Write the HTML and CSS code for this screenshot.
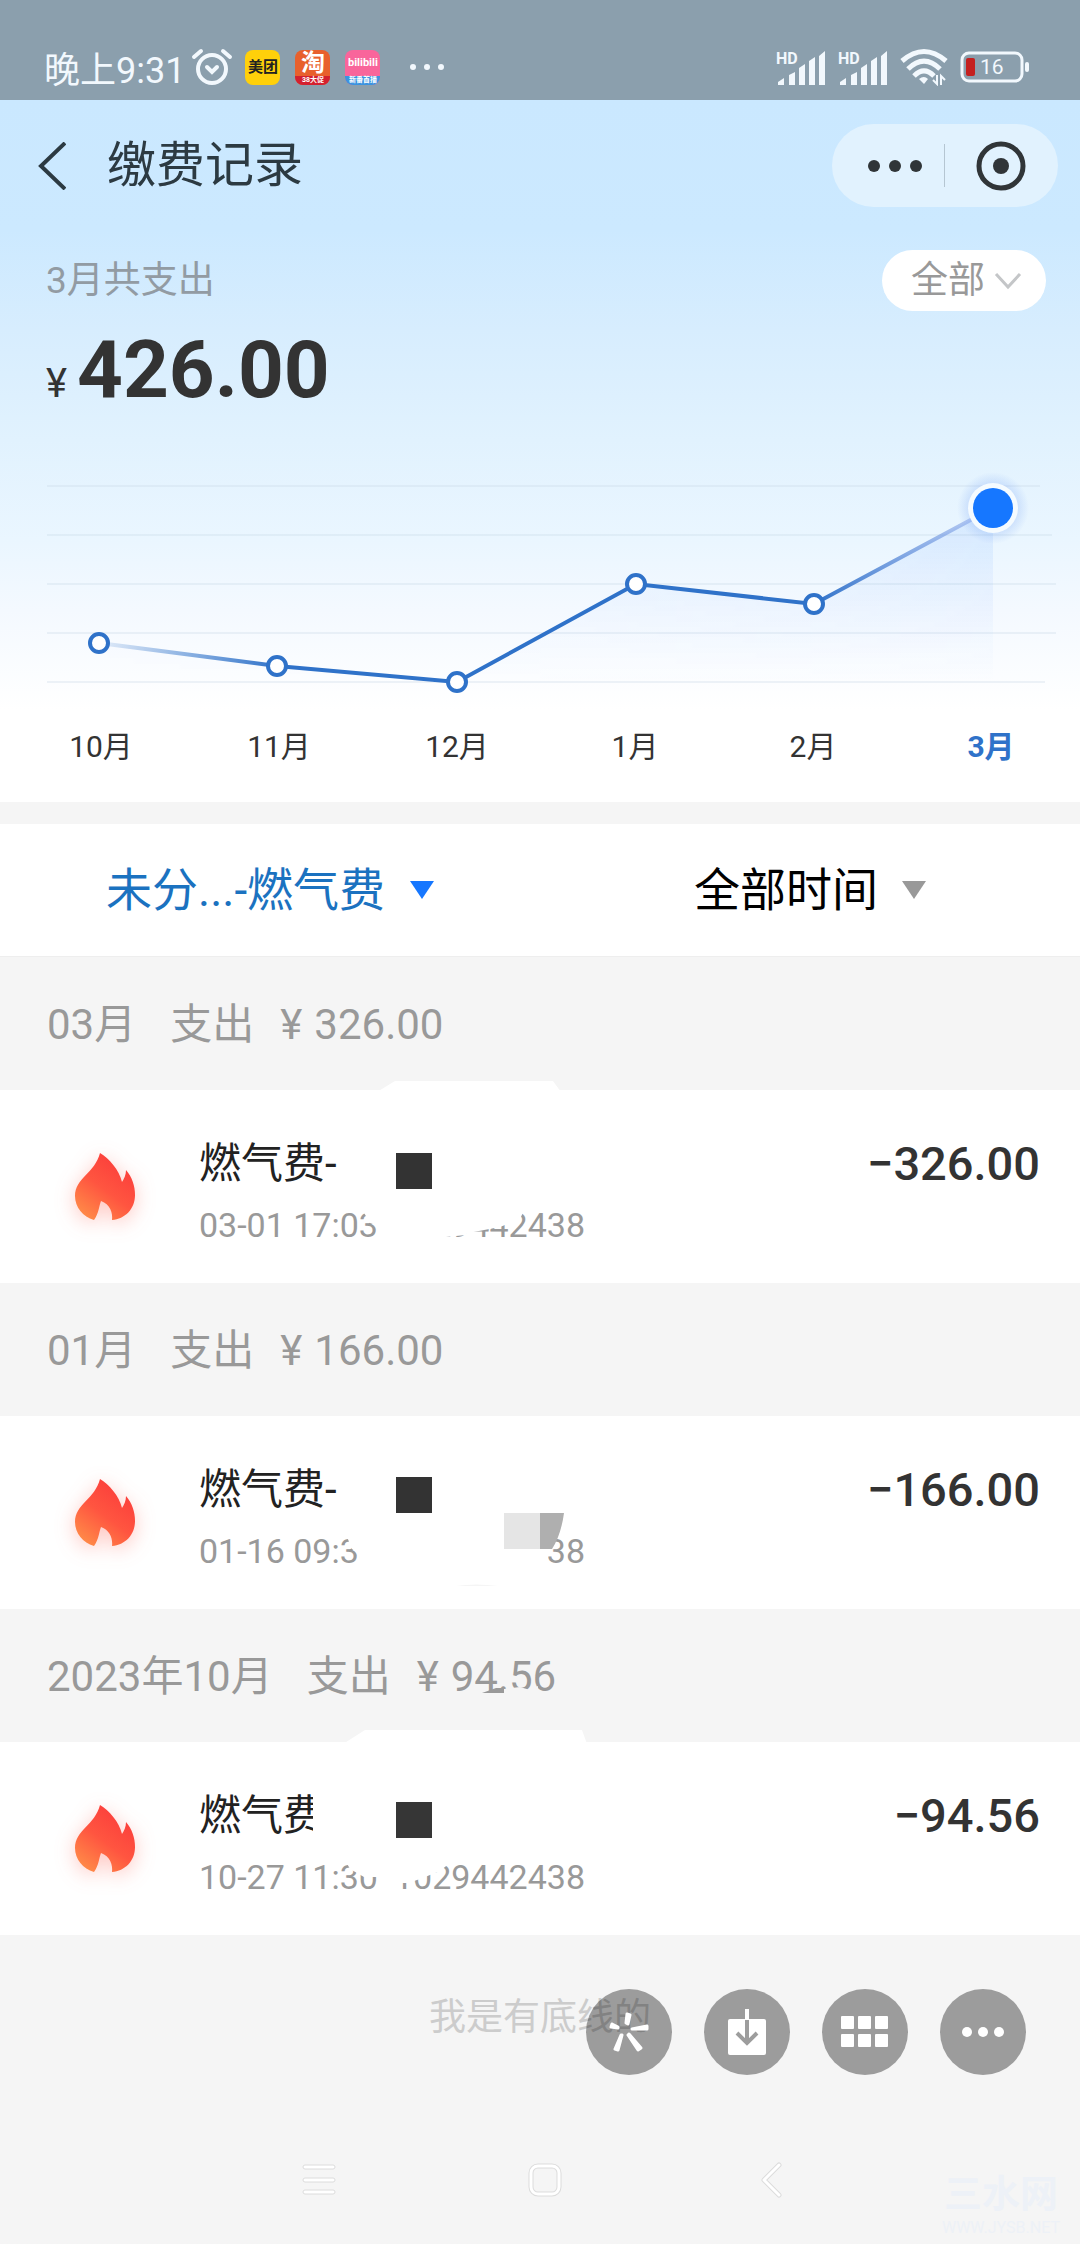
FILE: index.html
```html
<!DOCTYPE html>
<html lang="zh-CN">
<head>
    <meta charset="UTF-8">
    <meta name="viewport" content="width=device-width, initial-scale=1.0">
    <title>缴费记录</title>
    <link rel="stylesheet" href="styles.css">
</head>
<body>
    <svg width="0" height="0" class="defs">
        <defs>
            <linearGradient id="flameFill" x1="0.8" y1="0.1" x2="0.2" y2="1">
                <stop offset="0" stop-color="#fb3d3b"/>
                <stop offset="0.5" stop-color="#ff5540"/>
                <stop offset="1" stop-color="#ff8c48"/>
            </linearGradient>
            <symbol id="flame" viewBox="0 0 61 67">
                <path fill="url(#flameFill)" d="M25 0C34 5 44 17 47 29C49 26 51 22 51 17C57 24 60 33 60 42C60 56 50 66 37 67C38 60 35 51 26 48C24 53 24 60 19 67C8 64 0 54 0 43C0 25 20 20 25 0Z"/>
            </symbol>
            <symbol id="signal" viewBox="0 0 50 36">
                <path fill="#f2f8fd" d="M2 33l6-4v7H2zM13 26l6-3v13h-6zM23 19l6-4v21h-6zM33 12l6-4v28h-6zM43 7l6-5v34h-6z"/>
            </symbol>
        </defs>
    </svg>

    <div class="status-bar">
        <span class="time">晚上9:31</span>
        <svg class="alarm" width="42" height="38" viewBox="0 0 42 38" fill="none" stroke="#f2f8fd" stroke-width="4" stroke-linecap="round">
            <circle cx="21" cy="21" r="14"/>
            <path d="M3 9l7-6M39 9l-7-6M16 19l5 5 5-5"/>
        </svg>
        <span class="app app-meituan">美团</span>
        <span class="app app-taobao"><b>淘</b><small>38大促</small></span>
        <span class="app app-bili"><b>bilibili</b><small>新番首播</small></span>
        <svg class="more" width="36" height="8" viewBox="0 0 36 8" fill="#f2f8fd">
            <circle cx="4" cy="4" r="3"/><circle cx="18" cy="4" r="3"/><circle cx="32" cy="4" r="3"/>
        </svg>
        <div class="status-right">
            <span class="sim"><i>HD</i><svg width="50" height="36"><use href="#signal"/></svg></span>
            <span class="sim"><i>HD</i><svg width="50" height="36"><use href="#signal"/></svg></span>
            <svg width="48" height="38" viewBox="0 0 48 38" fill="none" stroke="#f2f8fd" stroke-width="5">
                <path d="M2 13Q24 -6 46 13M8 21Q24 5 40 21M14 28Q24 18 34 28"/>
                <path d="M19 31q5-4 9 0l-4 5z" fill="#f2f8fd" stroke="none"/>
                <path stroke-width="2" d="M37 27v9l-4-4M41 37v-9l4 4"/>
            </svg>
            <svg width="70" height="34" viewBox="0 0 70 34">
                <rect x="2" y="3" width="60" height="28" rx="7" fill="none" stroke="#f2f8fd" stroke-width="3"/>
                <rect x="6" y="8" width="9" height="18" rx="2" fill="#c4201f"/>
                <rect x="65" y="12" width="4" height="10" rx="2" fill="#f2f8fd"/>
                <text x="20" y="24" class="battery-text">16</text>
            </svg>
        </div>
    </div>

    <div class="hero">
        <div class="title-bar">
            <button class="back" aria-label="返回">
                <svg width="28" height="48" viewBox="0 0 28 48" fill="none" stroke="#2c3a42" stroke-width="4">
                    <path d="M27 1L3 24l24 23"/>
                </svg>
            </button>
            <h1>缴费记录</h1>
            <div class="capsule">
                <button class="capsule-more" aria-label="更多">
                    <svg width="54" height="12" viewBox="0 0 54 12" fill="#303538">
                        <circle cx="6" cy="6" r="6"/><circle cx="27" cy="6" r="6"/><circle cx="48" cy="6" r="6"/>
                    </svg>
                </button>
                <button class="capsule-close" aria-label="关闭">
                    <svg width="50" height="50" viewBox="0 0 50 50">
                        <circle cx="25" cy="25" r="22" fill="none" stroke="#303538" stroke-width="5"/>
                        <circle cx="25" cy="25" r="8" fill="#303538"/>
                    </svg>
                </button>
            </div>
        </div>

        <div class="summary">
            <span class="summary-label">3月共支出</span>
            <label class="pill">
                <select aria-label="类型">
                    <option>全部</option>
                    <option>支出</option>
                </select>
                <svg width="28" height="18" viewBox="0 0 28 18" fill="none" stroke="#c4c6c8" stroke-width="3">
                    <path d="M2 2l12 13L26 2"/>
                </svg>
            </label>
        </div>
        <div class="total"><span>¥</span><strong>426.00</strong></div>

        <svg class="chart" viewBox="0 0 1080 260">
            <defs>
                <linearGradient id="line" gradientUnits="userSpaceOnUse" x1="99" y1="0" x2="993" y2="0">
                    <stop offset="0" stop-color="#2f72c9" stop-opacity="0.1"/>
                    <stop offset="0.2" stop-color="#2f72c9"/>
                    <stop offset="0.8" stop-color="#2f72c9"/>
                    <stop offset="1" stop-color="#8fa8ea" stop-opacity="0.5"/>
                </linearGradient>
                <linearGradient id="area" x1="0" y1="0" x2="0" y2="1">
                    <stop offset="0" stop-color="#4a90ff" stop-opacity="0.13"/>
                    <stop offset="1" stop-color="#4a90ff" stop-opacity="0"/>
                </linearGradient>
                <linearGradient id="fadeIn" x1="0" y1="0" x2="1" y2="0">
                    <stop offset="0" stop-color="#000"/>
                    <stop offset="1" stop-color="#fff"/>
                </linearGradient>
                <mask id="areaMask"><rect width="1080" height="260" fill="url(#fadeIn)"/></mask>
                <radialGradient id="glow">
                    <stop offset="0.5" stop-color="#7fa8f5" stop-opacity="0.4"/>
                    <stop offset="1" stop-color="#7fa8f5" stop-opacity="0"/>
                </radialGradient>
            </defs>
            <path class="grid-lines" d="M47 36H1040M47 85H1052M47 134H1056M47 183H1056M47 232H1045"/>
            <path fill="url(#area)" mask="url(#areaMask)" d="M99 193L277 216 457 232 636 134 814 154 993 58V232H99Z"/>
            <path fill="none" stroke="url(#line)" stroke-width="4" d="M99 193L277 216 457 232 636 134 814 154 993 58"/>
            <g class="dots">
                <circle cx="99" cy="193" r="9"/>
                <circle cx="277" cy="216" r="9"/>
                <circle cx="457" cy="232" r="9"/>
                <circle cx="636" cy="134" r="9"/>
                <circle cx="814" cy="154" r="9"/>
            </g>
            <circle cx="993" cy="58" r="36" fill="url(#glow)"/>
            <circle cx="993" cy="58" r="25" fill="#f5fbff"/>
            <circle cx="993" cy="58" r="20" fill="#1677ff"/>
        </svg>
        <div class="months">
            <span>10月</span>
            <span>11月</span>
            <span>12月</span>
            <span>1月</span>
            <span>2月</span>
            <span class="active">3月</span>
        </div>
    </div>

    <div class="filters">
        <label class="filter filter-active">
            <select aria-label="分类">
                <option>未分...-燃气费</option>
            </select>
            <svg width="24" height="18" viewBox="0 0 24 18"><path d="M0 0h24L12 18z" fill="#1677ff"/></svg>
        </label>
        <label class="filter">
            <select aria-label="时间">
                <option>全部时间</option>
            </select>
            <svg width="24" height="18" viewBox="0 0 24 18"><path d="M0 0h24L12 18z" fill="#999"/></svg>
        </label>
    </div>

    <div class="month-head"><span>03月</span><span>支出</span><span class="sum"><i>¥</i>326.00</span></div>
    <div class="record">
        <svg class="flame" width="61" height="67"><use href="#flame"/></svg>
        <div class="record-info">
            <div class="record-name">燃气费-</div>
            <div class="record-meta"><span>03-01 17:03</span><span>1029442438</span></div>
        </div>
        <div class="record-amount">−326.00</div>
        <!-- hides the account name and part of the number -->
        <svg class="cover" width="620" height="212" viewBox="0 -20 620 212">
            <path fill="#fff" d="M377 1L395 -10H553L561 1ZM360 115L370 132 381 136V160H402L436 145 463 143 500 136 520 128 526 115Z"/>
            <path fill="#fff" d="M381 115H466V144L436 147V160H381Z"/>
            <rect x="396" y="62" width="36" height="36" fill="#333"/>
        </svg>
    </div>

    <div class="month-head"><span>01月</span><span>支出</span><span class="sum"><i>¥</i>166.00</span></div>
    <div class="record">
        <svg class="flame" width="61" height="67"><use href="#flame"/></svg>
        <div class="record-info">
            <div class="record-name">燃气费-</div>
            <div class="record-meta"><span>01-16 09:33</span><span>1029442438</span></div>
        </div>
        <div class="record-amount">−166.00</div>
        <svg class="cover" width="620" height="212" viewBox="0 -20 620 212">
            <path fill="#fff" d="M345 115L352 132 360 138V160H545L549 132 564 96H360Z"/>
            <rect x="396" y="60" width="36" height="36" fill="#333"/>
            <rect x="504" y="96" width="36" height="36" fill="#e5e5e5"/>
            <path fill="#afafaf" d="M540 96h24q-3 22-12 36h-12z"/>
            <path fill="#f5f5f5" d="M456 169q20-3 42 0z"/>
        </svg>
    </div>

    <div class="month-head">
        <span>2023年10月</span><span>支出</span><span class="sum"><i>¥</i>94.56</span>
        <svg class="cover" width="620" height="133" viewBox="0 0 620 133">
            <path fill="#f5f5f5" d="M504 80l16-2 10 3 8-4v14h-34z"/>
            <path fill="#999" d="M482 84l14-5h8v5z"/>
        </svg>
    </div>
    <div class="record">
        <svg class="flame" width="61" height="67"><use href="#flame"/></svg>
        <div class="record-info">
            <div class="record-name">燃气费</div>
            <div class="record-meta"><span>10-27 11:30</span><span>1029442438</span></div>
        </div>
        <div class="record-amount">−94.56</div>
        <svg class="cover" width="620" height="212" viewBox="0 -20 620 212">
            <path fill="#fff" d="M343 1L365 -13H582L587 1ZM344 115L350 126 364 134H402V140H408L420 136 440 128 456 115Z"/>
            <path fill="#fff" d="M380 130H401V160H380ZM313 45H330V100H317L313 90Z"/>
            <rect x="396" y="59" width="36" height="36" fill="#363636"/>
        </svg>
    </div>

    <div class="bottom">
        <p class="end-text">我是有底线的</p>
        <div class="tools">
            <button aria-label="特效">
                <svg width="86" height="86" viewBox="0 0 86 86" fill="#fff" stroke="#fff" stroke-width="3" stroke-linejoin="round">
                    <path d="M40 34l1-9 3 1-2 9zM32 39l-7-1 1-3 6 3zM46 40l15-3v3zM35 46l-6 14 3 1 4-15zM42 46l10 15 3-2-12-14z"/>
                </svg>
            </button>
            <button aria-label="下载">
                <svg width="38" height="46" viewBox="0 0 38 46">
                    <rect y="10" width="38" height="36" rx="2" fill="#fff"/>
                    <path d="M19 0v11" stroke="#fff" stroke-width="4"/>
                    <path d="M19 11v23M9 24l10 10 10-10" fill="none" stroke="#9d9d9d" stroke-width="4"/>
                </svg>
            </button>
            <button aria-label="九宫格">
                <svg width="48" height="32" viewBox="0 0 48 32" fill="#fff">
                    <rect width="13" height="13" rx="1"/><rect x="17" width="13" height="13" rx="1"/><rect x="34" width="13" height="13" rx="1"/>
                    <rect y="18" width="13" height="13" rx="1"/><rect x="17" y="18" width="13" height="13" rx="1"/><rect x="34" y="18" width="13" height="13" rx="1"/>
                </svg>
            </button>
            <button aria-label="更多">
                <svg width="42" height="10" viewBox="0 0 42 10" fill="#fff">
                    <circle cx="5" cy="5" r="5"/><circle cx="21" cy="5" r="5"/><circle cx="37" cy="5" r="5"/>
                </svg>
            </button>
        </div>
    </div>

    <div class="nav-bar">
        <button aria-label="任务">
            <svg width="34" height="36" viewBox="0 0 34 36" fill="#fff" stroke="#dcdcdc">
                <rect x="1" y="3" width="32" height="4" rx="2"/><rect x="1" y="16" width="32" height="4" rx="2"/><rect x="1" y="28" width="32" height="4" rx="2"/>
            </svg>
        </button>
        <button aria-label="主页">
            <svg width="34" height="36" viewBox="0 0 34 36" fill="none">
                <rect x="3" y="4" width="28" height="28" rx="7" stroke="#dcdcdc" stroke-width="5"/>
                <rect x="3" y="4" width="28" height="28" rx="7" stroke="#fff" stroke-width="3"/>
            </svg>
        </button>
        <button aria-label="返回">
            <svg width="34" height="36" viewBox="0 0 34 36" fill="none" stroke-linecap="round" stroke-linejoin="round">
                <path d="M25 3L10 18l15 15" stroke="#dcdcdc" stroke-width="5"/>
                <path d="M25 3L10 18l15 15" stroke="#fff" stroke-width="3"/>
            </svg>
        </button>
        <div class="watermark"><b>三水网</b><small>WWW.JYSB.NET</small></div>
    </div>
</body>
</html>
```
FILE: styles.css
```css
* {
    box-sizing: border-box;
}
body {
    margin: 0;
    background: #f5f5f5;
    color: #333;
    font-family: Roboto, "Noto Sans CJK SC", sans-serif;
}
button {
    padding: 0;
    border: 0;
    background: none;
    display: flex;
    align-items: center;
    justify-content: center;
}
select {
    appearance: none;
    padding: 0;
    border: 0;
    background: none;
    color: inherit;
    font: inherit;
}
i {
    font-style: normal;
}
svg {
    flex-shrink: 0;
}
.defs {
    position: absolute;
}

/* status bar */
.status-bar {
    display: flex;
    align-items: center;
    height: 100px;
    padding: 34px 50px 0 44px;
    background: #8b9fad;
    color: #f2f8fd;
}
.time {
    font-size: 36px;
    white-space: nowrap;
}
.alarm {
    margin: 0 12px 0 6px;
}
.app {
    display: flex;
    flex-direction: column;
    align-items: center;
    justify-content: center;
    width: 35px;
    height: 35px;
    margin-right: 15px;
    border-radius: 8px;
    overflow: hidden;
    white-space: nowrap;
    line-height: 1;
}
.app small {
    width: 100%;
    font-size: 7px;
    font-weight: 700;
    line-height: 9px;
    text-align: center;
}
.app-meituan {
    background: #ffd00a;
    color: #222;
    font-size: 15px;
    font-weight: 700;
}
.app-taobao {
    background: #e8602c;
    color: #fff;
}
.app-taobao b {
    font-size: 24px;
    line-height: 26px;
}
.app-taobao small {
    background: #d3202f;
}
.app-bili {
    background: #f9659b;
    color: #fff;
}
.app-bili b {
    font-size: 11px;
    line-height: 26px;
}
.app-bili small {
    background: #3b93e0;
}
.more {
    margin-left: 14px;
}
.status-right {
    display: flex;
    align-items: center;
    gap: 12px;
    margin-left: auto;
}
.sim {
    position: relative;
    display: flex;
}
.sim i {
    position: absolute;
    left: 0;
    top: 2px;
    font-size: 16px;
    font-weight: 700;
    line-height: 16px;
}
.battery-text {
    fill: #f2f8fd;
    font-size: 21px;
}

/* top card */
.hero {
    padding: 24px 0 33px;
    background: linear-gradient(#cae8ff 0, #cce9ff 130px, #d7edfe 230px, #e1f2fe 340px, #eaf6ff 440px, #f4f9ff 510px, #fff 610px);
}
.title-bar {
    display: flex;
    align-items: center;
    padding: 0 22px 0 38px;
}
.title-bar h1 {
    margin: 0 auto 0 41px;
    color: #2c3a42;
    font-size: 49px;
    font-weight: 400;
    line-height: 60px;
}
.capsule {
    display: flex;
    width: 226px;
    height: 83px;
    padding: 20px 0;
    border-radius: 42px;
    background: #e1f2fe;
}
.capsule-more {
    width: 112px;
    padding-left: 14px;
}
.capsule-close {
    width: 112px;
    border-left: 1px solid #b5c6d2;
}
.summary {
    display: flex;
    align-items: center;
    justify-content: space-between;
    margin-top: 43px;
    padding: 0 34px 0 46px;
}
.summary-label {
    color: #929ba3;
    font-size: 37px;
    line-height: 48px;
}
.pill {
    display: flex;
    align-items: center;
    gap: 9px;
    height: 61px;
    padding: 0 24px 0 29px;
    border-radius: 31px;
    background: #fff;
    color: #999;
    font-size: 37px;
}
.total {
    display: flex;
    align-items: baseline;
    gap: 10px;
    margin-top: 18px;
    padding-left: 46px;
}
.total span {
    font-size: 40px;
    line-height: 40px;
}
.total strong {
    font-size: 80px;
    font-weight: 700;
    line-height: 82px;
}
.chart {
    display: block;
    width: 100%;
    margin-top: 39px;
}
.grid-lines {
    stroke: #c8d8e6;
    stroke-opacity: 0.3;
    stroke-width: 2;
}
.dots circle {
    fill: #fff;
    stroke: #2f72c9;
    stroke-width: 4;
}
.months {
    display: grid;
    grid-template-columns: repeat(6, 1fr);
    margin-top: 15px;
    padding-left: 12px;
    font-size: 30px;
    line-height: 44px;
    text-align: center;
}
.months .active {
    color: #2f72c9;
    font-weight: 700;
}

/* filters */
.filters {
    display: grid;
    grid-template-columns: 1fr 1fr;
    margin-top: 22px;
    border-bottom: 1px solid #eee;
    background: #fff;
}
.filter {
    display: flex;
    align-items: center;
    justify-content: center;
    gap: 24px;
    height: 132px;
    color: #000;
    font-size: 46px;
}
.filter-active {
    color: #1b72c0;
}

/* records */
.month-head {
    position: relative;
    display: flex;
    align-items: baseline;
    gap: 34px;
    height: 133px;
    padding-left: 47px;
    color: #999;
    font-size: 42px;
    line-height: 136px;
}
.sum {
    margin-left: -8px;
}
.sum i {
    margin-right: 12px;
}
.record {
    position: relative;
    display: flex;
    align-items: flex-start;
    padding: 46px 40px 35px 75px;
    background: #fff;
}
.flame {
    margin: 17px 63px 0 0;
    filter: drop-shadow(0 4px 10px rgba(255, 80, 64, 0.3));
}
.record-name {
    color: #222;
    font-size: 42px;
    line-height: 56px;
}
.record-meta {
    display: flex;
    gap: 16px;
    margin-top: 10px;
    color: #999;
    font-size: 34px;
    line-height: 46px;
}
.record-amount {
    margin-left: auto;
    font-size: 47px;
    font-weight: 500;
    line-height: 56px;
}
.cover {
    position: absolute;
    left: 0;
    bottom: 0;
}

/* bottom */
.bottom {
    position: relative;
    padding-top: 54px;
}
.end-text {
    margin: 0;
    color: #ccc;
    font-size: 37px;
    line-height: 58px;
    text-align: center;
}
.tools {
    position: absolute;
    top: 54px;
    right: 54px;
    display: flex;
    gap: 32px;
}
.tools button {
    width: 86px;
    height: 86px;
    border-radius: 50%;
    background: rgba(0, 0, 0, 0.36);
}
.nav-bar {
    position: relative;
    display: flex;
    justify-content: space-between;
    margin-top: 115px;
    padding: 0 27% 46px 28%;
}
.watermark {
    position: absolute;
    top: 8px;
    right: 20px;
    display: flex;
    flex-direction: column;
    align-items: center;
    color: #edf1f7;
    white-space: nowrap;
}
.watermark b {
    font-size: 38px;
    line-height: 48px;
}
.watermark small {
    font-size: 16px;
    line-height: 20px;
}
```
